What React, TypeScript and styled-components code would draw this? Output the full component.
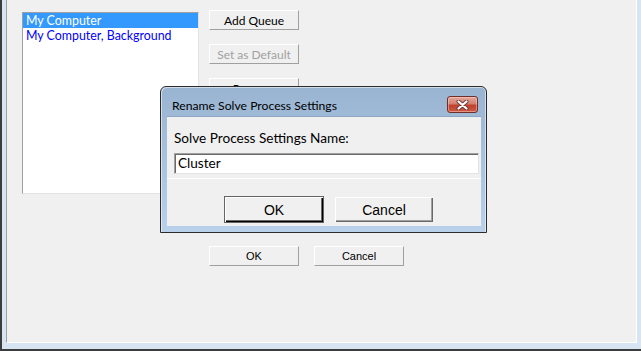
import React from "react";
import styled, { createGlobalStyle } from "styled-components";

const GlobalStyle = createGlobalStyle`
  html, body {
    margin: 0;
    padding: 0;
    background: #f0f0f0;
  }
  body {
    font-family: Lato, "Liberation Sans", Arial, sans-serif;
  }
`;

const Screen = styled.div`
  position: relative;
  width: 641px;
  height: 351px;
  overflow: hidden;
`;

const Frame = styled.div`
  box-sizing: border-box;
  width: 641px;
  height: 351px;
  background: #d7e4f2;
  border-left: 2px solid #3c3c3c;
  border-bottom: 2px solid #3c3c3c;
  padding: 0 4px 6px 4px;
`;

const Client = styled.div`
  box-sizing: border-box;
  width: 631px;
  height: 343px;
  background: #f0f0f0;
  border-left: 1px solid #a0a0a0;
  border-right: 1px solid #ffffff;
  border-bottom: 1px solid #ffffff;
  padding: 10px 0 0 15px;
  display: grid;
  grid-template-columns: 177px auto;
  grid-template-rows: auto auto;
  column-gap: 10px;
  row-gap: 52px;
  align-content: start;
`;

const ListBox = styled.div`
  box-sizing: border-box;
  margin-top: 2px;
  width: 177px;
  height: 182px;
  background: #ffffff;
  border-top: 1px solid #a0a0a0;
  border-left: 1px solid #a0a0a0;
  border-right: 1px solid #e3e3e3;
  border-bottom: 1px solid #e3e3e3;
  display: flex;
  flex-direction: column;
`;

const ListItem = styled.div<{ $selected?: boolean }>`
  height: 15px;
  line-height: 15px;
  padding: 0 0 0 3px;
  box-sizing: border-box;
  font-size: 12.4px;
  white-space: nowrap;
  color: ${(p) => (p.$selected ? "#ffffff" : "#0000ff")};
  background: ${(p) => (p.$selected ? "#3399ff" : "transparent")};
`;

const ButtonColumn = styled.div`
  display: flex;
  flex-direction: column;
  gap: 14px;
`;

const ButtonRow = styled.div`
  grid-column: 2;
  display: flex;
  gap: 15px;
`;

const FlatButton = styled.div<{ $disabled?: boolean; $classic?: boolean }>`
  box-sizing: border-box;
  width: 90px;
  height: 20px;
  display: flex;
  align-items: center;
  justify-content: center;
  font-family: ${(p) => (p.$classic ? '"Liberation Sans", Arial, sans-serif' : 'Lato, "Liberation Sans", sans-serif')};
  font-size: ${(p) => (p.$classic ? "11px" : "12px")};
  color: ${(p) => (p.$disabled ? "#a0a0a0" : "#000000")};
  background: #f0f0f0;
  border-top: 1px solid #ffffff;
  border-left: 1px solid #ffffff;
  border-right: 1px solid #a0a0a0;
  border-bottom: 1px solid #a0a0a0;
`;

const Dialog = styled.div`
  position: absolute;
  left: 160px;
  top: 86px;
  box-sizing: border-box;
  width: 327px;
  height: 147px;
  border: 1px solid #2b2b2b;
  border-radius: 6px 6px 0 0;
  background: linear-gradient(#99b4d1, #b9d1ea);
  box-shadow: inset 1px 1px 0 rgba(255, 255, 255, 0.55), inset -1px 0 0 rgba(255, 255, 255, 0.55);
  padding: 0 5px 6px 6px;
  display: flex;
  flex-direction: column;
`;

const TitleBar = styled.div`
  height: 29px;
  display: flex;
  justify-content: space-between;
  align-items: flex-start;
  padding: 9px 3px 0 5px;
  box-sizing: border-box;
`;

const TitleText = styled.div`
  margin-top: 2px;
  font-size: 12.2px;
  line-height: 15px;
  color: #000000;
`;

const CloseButton = styled.div`
  box-sizing: border-box;
  width: 31px;
  height: 17px;
  border: 1px solid #6e2f29;
  border-radius: 3px;
  background: linear-gradient(#e4a69c 0%, #d3806f 45%, #c0402c 55%, #cb5a43 100%);
  box-shadow: inset 0 0 0 1px rgba(255, 220, 210, 0.45);
  display: flex;
  align-items: center;
  justify-content: center;
`;

const DialogClient = styled.div`
  flex: 1;
  background: #f0f0f0;
  border-top: 1px solid #8ea6c2;
  display: flex;
  flex-direction: column;
`;

const FieldPanel = styled.div`
  height: 62px;
  box-sizing: border-box;
  border-bottom: 1px solid #ffffff;
  padding: 0 2px 0 7px;
  display: flex;
  flex-direction: column;
`;

const FieldLabel = styled.div`
  margin-top: 13px;
  font-size: 13.6px;
  line-height: 16px;
  color: #000000;
`;

const TextInput = styled.div`
  box-sizing: border-box;
  margin-top: 7px;
  height: 21px;
  background: #ffffff;
  border-top: 1px solid #a0a0a0;
  border-left: 1px solid #a0a0a0;
  border-right: 1px solid #e3e3e3;
  border-bottom: 1px solid #e3e3e3;
  box-shadow: inset 1px 1px 0 #696969;
  padding: 1px 0 0 3px;
  font-size: 13.6px;
  line-height: 17px;
  color: #000000;
`;

const DialogFooter = styled.div`
  display: flex;
  gap: 10px;
  padding: 17px 0 0 57px;
`;

const DialogButton = styled.div<{ $default?: boolean }>`
  box-sizing: border-box;
  width: 100px;
  height: 27px;
  display: flex;
  align-items: center;
  justify-content: center;
  font-family: "Liberation Sans", Arial, sans-serif;
  font-size: 14px;
  color: #000000;
  background: #f0f0f0;
  border: 1px solid ${(p) => (p.$default ? "#646464" : "transparent")};
  box-shadow: ${(p) =>
    p.$default
      ? "inset 1px 1px 0 #ffffff, inset -1px -1px 0 #000000, inset -2px -2px 0 #696969"
      : "inset 1px 1px 0 #ffffff, inset -1px -1px 0 #696969, inset -2px -2px 0 #a0a0a0"};
`;

const CloseGlyph = () => (
  <svg width="13" height="10" viewBox="0 0 13 10">
    <path d="M2.5 1.5 L10.5 8.5 M10.5 1.5 L2.5 8.5" stroke="#6b3a36" strokeWidth="4" strokeLinecap="round" />
    <path d="M2.5 1.5 L10.5 8.5 M10.5 1.5 L2.5 8.5" stroke="#ffffff" strokeWidth="2.2" strokeLinecap="round" />
  </svg>
);

const App = () => {
  return (
    <>
      <GlobalStyle />
      <Screen>
        <Frame>
          <Client>
            <ListBox>
              <ListItem $selected>My Computer</ListItem>
              <ListItem>My Computer, Background</ListItem>
            </ListBox>
            <ButtonColumn>
              <FlatButton>Add Queue</FlatButton>
              <FlatButton $disabled>Set as Default</FlatButton>
              <FlatButton>Remove</FlatButton>
            </ButtonColumn>
            <ButtonRow>
              <FlatButton $classic>OK</FlatButton>
              <FlatButton $classic>Cancel</FlatButton>
            </ButtonRow>
          </Client>
        </Frame>
        <Dialog>
          <TitleBar>
            <TitleText>Rename Solve Process Settings</TitleText>
            <CloseButton>
              <CloseGlyph />
            </CloseButton>
          </TitleBar>
          <DialogClient>
            <FieldPanel>
              <FieldLabel>Solve Process Settings Name:</FieldLabel>
              <TextInput>Cluster</TextInput>
            </FieldPanel>
            <DialogFooter>
              <DialogButton $default>OK</DialogButton>
              <DialogButton>Cancel</DialogButton>
            </DialogFooter>
          </DialogClient>
        </Dialog>
      </Screen>
    </>
  );
};

export default App;
